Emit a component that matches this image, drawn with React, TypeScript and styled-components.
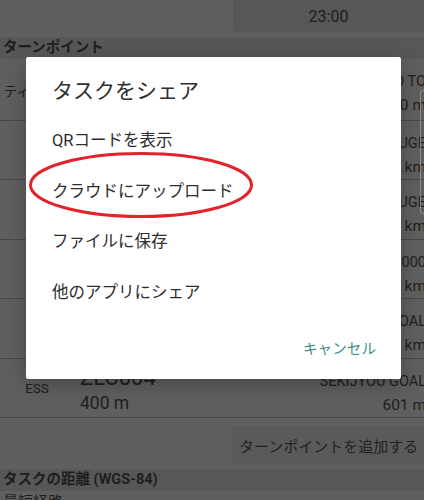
import type { FC } from "react";
import styled, { createGlobalStyle } from "styled-components";

const GlobalStyle = createGlobalStyle`
  html, body {
    margin: 0;
    padding: 0;
    background: #5f5f5f;
    overflow: hidden;
  }
  body {
    font-family: Roboto, "Noto Sans CJK JP", sans-serif;
  }
`;

const Page = styled.div`
  position: relative;
  width: 424px;
  height: 500px;
  overflow: hidden;
  background: #5f5f5f;
  color: #1e1e1e;
`;

const TopBar = styled.div`
  display: flex;
  justify-content: flex-end;
  height: 32px;
`;

const TimeBox = styled.div`
  width: 191px;
  display: flex;
  align-items: center;
  justify-content: center;
  background: #575757;
  border-bottom-left-radius: 3px;
  font-size: 16px;
`;

const SectionHeader = styled.div<{ $top: number }>`
  margin-top: ${(p) => p.$top}px;
  height: 22px;
  line-height: 22px;
  padding-left: 3px;
  background: #575757;
  font-size: 14.5px;
  font-weight: 700;
  white-space: nowrap;
`;

const Row = styled.div<{ $h: number }>`
  box-sizing: border-box;
  height: ${(p) => p.$h}px;
  display: grid;
  grid-template-columns: 74px 1fr auto;
  border-bottom: 1px solid #474747;
  overflow: hidden;
`;

const Label = styled.div`
  align-self: center;
  text-align: center;
  font-size: 13.5px;
  white-space: nowrap;
`;

const Middle = styled.div`
  display: flex;
  flex-direction: column;
  padding: 5px 0 0 6px;
`;

const PointName = styled.div`
  font-size: 22px;
  line-height: 28px;
`;

const PointDist = styled.div`
  font-size: 17.5px;
  line-height: 22px;
`;

const Right = styled.div`
  display: flex;
  flex-direction: column;
  align-items: flex-end;
  padding-top: 14px;
  margin-right: -2px;
  white-space: nowrap;
`;

const RightName = styled.div`
  font-size: 14.5px;
  line-height: 18px;
`;

const RightDist = styled.div`
  margin-top: 4px;
  font-size: 15.5px;
  line-height: 20px;
`;

const AddRow = styled.div`
  display: flex;
  justify-content: flex-end;
  padding-top: 8px;
  margin-right: -10px;
`;

const AddButton = styled.div`
  width: 202px;
  height: 38px;
  display: flex;
  align-items: center;
  padding-left: 7px;
  box-sizing: border-box;
  background: #5a5a5a;
  border-radius: 3px;
  font-size: 15px;
  color: #222;
  white-space: nowrap;
`;

const PlainLine = styled.div`
  padding-left: 3px;
  font-size: 15px;
  line-height: 22px;
`;

const Bracket = styled.div`
  position: absolute;
  left: 420px;
  top: 90px;
  width: 8px;
  height: 122px;
  border: 1px solid #8c8c8c;
  border-right: none;
  border-radius: 3px 0 0 3px;
`;

/* dialog */

const Dialog = styled.div`
  position: absolute;
  left: 26px;
  top: 57px;
  width: 375px;
  height: 322px;
  background: #fff;
  border-radius: 2px;
  box-shadow: 0 6px 20px rgba(0, 0, 0, 0.25);
  display: flex;
  flex-direction: column;
`;

const DialogTitle = styled.div`
  padding: 21px 26px 0;
  font-size: 21px;
  line-height: 26px;
  color: #2e2e2e;
`;

const OptionList = styled.div`
  margin-top: 10px;
  display: flex;
  flex-direction: column;
`;

const Option = styled.div`
  height: 50.5px;
  display: flex;
  align-items: center;
  padding-left: 26px;
  font-size: 16.5px;
  color: #2e2e2e;
`;

const Footer = styled.div`
  margin-top: 13px;
  height: 36px;
  display: flex;
  justify-content: flex-end;
  align-items: center;
  padding-right: 25px;
`;

const TextButton = styled.div`
  font-size: 14.6px;
  color: #3f8f84;
`;

const Mark = styled.svg`
  position: absolute;
  left: 27px;
  top: 150px;
`;

type Point = {
  label: string;
  name: string;
  dist: string;
  rname: string;
  rdist: string;
  h: number;
};

const points: Point[] = [
  { label: "ティクオフ", name: "TAKEOFF", dist: "0 m", rname: "KAMIASO TO", rdist: "400 m", h: 62 },
  { label: "SSS", name: "SSS001", dist: "3000 m", rname: "KAMIUGE", rdist: "2.1 km", h: 59 },
  { label: "", name: "TP002", dist: "400 m", rname: "SHIMOUGE", rdist: "4.8 km", h: 60 },
  { label: "", name: "TP003", dist: "400 m", rname: "B000", rdist: "7.3 km", h: 59 },
  { label: "", name: "TP004", dist: "400 m", rname: "SEKIJYOU GOAL", rdist: "9.6 km", h: 60 },
  { label: "ESS", name: "ZLC004", dist: "400 m", rname: "SEKIJYOU GOAL", rdist: "601 m", h: 59 },
];

const options = ["QRコードを表示", "クラウドにアップロード", "ファイルに保存", "他のアプリにシェア"];

const App: FC = () => {
  return (
    <Page>
      <GlobalStyle />
      <TopBar>
        <TimeBox>23:00</TimeBox>
      </TopBar>
      <SectionHeader $top={5}>ターンポイント</SectionHeader>
      {points.map((p, i) => (
        <Row key={i} $h={p.h}>
          <Label>{p.label}</Label>
          <Middle>
            <PointName>{p.name}</PointName>
            <PointDist>{p.dist}</PointDist>
          </Middle>
          <Right>
            <RightName>{p.rname}</RightName>
            <RightDist>{p.rdist}</RightDist>
          </Right>
        </Row>
      ))}
      <AddRow>
        <AddButton>ターンポイントを追加する</AddButton>
      </AddRow>
      <SectionHeader $top={5}>タスクの距離 (WGS-84)</SectionHeader>
      <PlainLine>最短経路</PlainLine>
      <Bracket />

      <Dialog>
        <DialogTitle>タスクをシェア</DialogTitle>
        <OptionList>
          {options.map((o) => (
            <Option key={o}>{o}</Option>
          ))}
        </OptionList>
        <Footer>
          <TextButton>キャンセル</TextButton>
        </Footer>
      </Dialog>

      <Mark width="230" height="70" viewBox="0 0 230 70">
        <ellipse cx="114" cy="35" rx="110.5" ry="31.5" fill="none" stroke="#e2232c" strokeWidth="3" />
      </Mark>
    </Page>
  );
};

export default App;
